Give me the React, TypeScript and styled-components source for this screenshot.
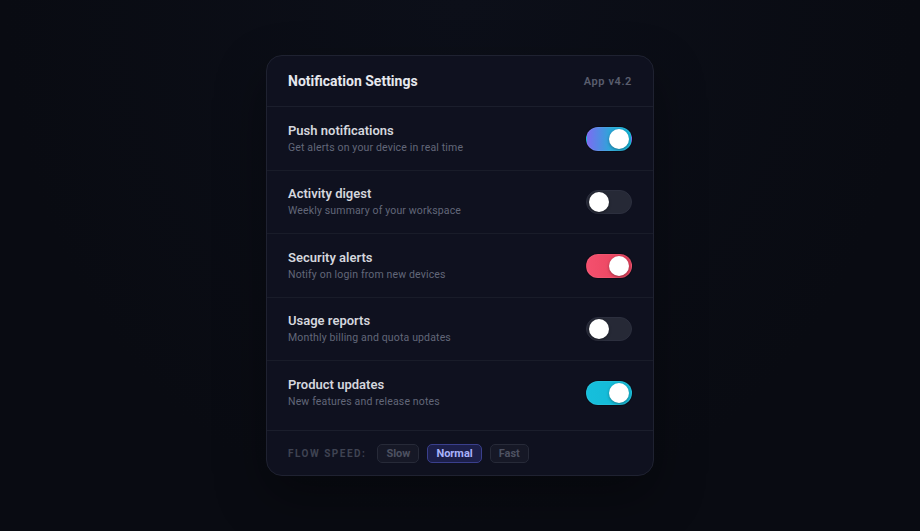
import React, { useState } from 'react'
import styled, { createGlobalStyle } from 'styled-components'

type Tone = 'violet' | 'rose' | 'cyan'

type Setting = {
  id: string
  title: string
  hint: string
  on: boolean
  tone: Tone
}

const initialSettings: Setting[] = [
  { id: 'push', title: 'Push notifications', hint: 'Get alerts on your device in real time', on: true, tone: 'violet' },
  { id: 'digest', title: 'Activity digest', hint: 'Weekly summary of your workspace', on: false, tone: 'violet' },
  { id: 'security', title: 'Security alerts', hint: 'Notify on login from new devices', on: true, tone: 'rose' },
  { id: 'usage', title: 'Usage reports', hint: 'Monthly billing and quota updates', on: false, tone: 'violet' },
  { id: 'product', title: 'Product updates', hint: 'New features and release notes', on: true, tone: 'cyan' },
]

const speeds = ['Slow', 'Normal', 'Fast']

const trackFill: Record<Tone, string> = {
  violet: 'linear-gradient(90deg, #7c6cf2 0%, #2aa8d8 55%, #14b4d6 100%)',
  rose: 'linear-gradient(90deg, #f4506e 0%, #ec4863 60%, #dc3d58 100%)',
  cyan: 'linear-gradient(90deg, #16bfdc 0%, #14b8d4 100%)',
}

const App: React.FunctionComponent = () => {
  const [settings, setSettings] = useState(initialSettings)
  const [speed, setSpeed] = useState('Normal')

  const toggle = (id: string): void =>
    setSettings(list => list.map(s => (s.id === id ? { ...s, on: !s.on } : s)))

  return (
    <>
      <GlobalStyle />
      <StyledPage>
        <StyledCard>
          <StyledHeader>
            <StyledTitle>Notification Settings</StyledTitle>
            <StyledVersion>App v4.2</StyledVersion>
          </StyledHeader>
          <StyledList>
            {settings.map(s => (
              <StyledRow key={s.id}>
                <StyledText>
                  <StyledRowTitle>{s.title}</StyledRowTitle>
                  <StyledRowHint>{s.hint}</StyledRowHint>
                </StyledText>
                <StyledSwitch
                  type="button"
                  aria-pressed={s.on}
                  $on={s.on}
                  $tone={s.tone}
                  onClick={(): void => toggle(s.id)}
                >
                  <StyledKnob $on={s.on} />
                </StyledSwitch>
              </StyledRow>
            ))}
          </StyledList>
          <StyledFooter>
            <StyledFooterLabel>Flow speed:</StyledFooterLabel>
            {speeds.map(sp => (
              <StyledSpeed key={sp} type="button" $active={sp === speed} onClick={(): void => setSpeed(sp)}>
                {sp}
              </StyledSpeed>
            ))}
          </StyledFooter>
        </StyledCard>
      </StyledPage>
    </>
  )
}

const GlobalStyle = createGlobalStyle`
  html, body {
    margin: 0;
    padding: 0;
    background: #090b12;
  }
  body {
    font-family: Roboto, "Noto Sans", "Liberation Sans", sans-serif;
    -webkit-font-smoothing: antialiased;
  }
`

const StyledPage = styled('div')`
  height: 531px;
  display: flex;
  align-items: center;
  justify-content: center;
  background: radial-gradient(ellipse at 50% 0%, #0c0f19 0%, #090b12 70%);
`

const StyledCard = styled('div')`
  width: 388px;
  box-sizing: border-box;
  background: #0f111f;
  border: 1px solid #1f2231;
  border-radius: 16px;
  overflow: hidden;
  box-shadow: 0 20px 50px rgba(0, 0, 0, 0.35);
`

const StyledHeader = styled('div')`
  height: 50px;
  padding: 0 21px;
  display: flex;
  align-items: center;
  justify-content: space-between;
  border-bottom: 1px solid #1b1e2c;
`

const StyledTitle = styled('h1')`
  margin: 0;
  font-size: 14px;
  font-weight: 700;
  color: #e6e8ee;
`

const StyledVersion = styled('span')`
  font-size: 11px;
  font-weight: 600;
  color: #5a5e6e;
  letter-spacing: 0.6px;
`

const StyledList = styled('div')`
  padding-bottom: 6.5px;
  border-bottom: 1px solid #1b1e2c;
`

const StyledRow = styled('div')`
  height: 62.5px;
  padding: 0 21px;
  display: flex;
  align-items: center;
  justify-content: space-between;
  border-bottom: 1px solid #191c29;

  &:last-child {
    border-bottom: none;
  }
`

const StyledText = styled('div')`
  display: flex;
  flex-direction: column;
  gap: 2px;
`

const StyledRowTitle = styled('span')`
  font-size: 13px;
  font-weight: 600;
  line-height: 17px;
  color: #d4d6dd;
`

const StyledRowHint = styled('span')`
  font-size: 10.5px;
  line-height: 14px;
  color: #626779;
  letter-spacing: 0.15px;
`

const StyledSwitch = styled('button')<{ $on: boolean; $tone: Tone }>`
  position: relative;
  width: 46px;
  height: 24px;
  padding: 0;
  margin-top: 1px;
  border-radius: 12px;
  border: 1px solid ${p => (p.$on ? 'rgba(255, 255, 255, 0.06)' : '#2c2f3e')};
  background: ${p => (p.$on ? trackFill[p.$tone] : '#262936')};
  cursor: pointer;
  box-shadow: ${p => (p.$on ? '0 0 0 1px rgba(0,0,0,0.25)' : 'none')};
`

const StyledKnob = styled('span')<{ $on: boolean }>`
  position: absolute;
  top: 1px;
  left: ${p => (p.$on ? '22px' : '2px')};
  width: 20px;
  height: 20px;
  border-radius: 50%;
  background: #ffffff;
  box-shadow: 0 1px 3px rgba(0, 0, 0, 0.35);
`

const StyledFooter = styled('div')`
  height: 44px;
  padding: 0 21px;
  display: flex;
  align-items: center;
  gap: 8px;
`

const StyledFooterLabel = styled('span')`
  font-size: 10px;
  font-weight: 700;
  letter-spacing: 1.5px;
  text-transform: uppercase;
  color: #3f4352;
  margin-right: 3px;
`

const StyledSpeed = styled('button')<{ $active: boolean }>`
  height: 19px;
  padding: 0 8px;
  border-radius: 5px;
  font-family: inherit;
  font-size: 11px;
  font-weight: 700;
  cursor: pointer;
  border: 1px solid ${p => (p.$active ? '#3a3f8c' : '#272a38')};
  background: ${p => (p.$active ? '#1c1f4a' : '#161826')};
  color: ${p => (p.$active ? '#a9b2fb' : '#4d5161')};
`

export default App
